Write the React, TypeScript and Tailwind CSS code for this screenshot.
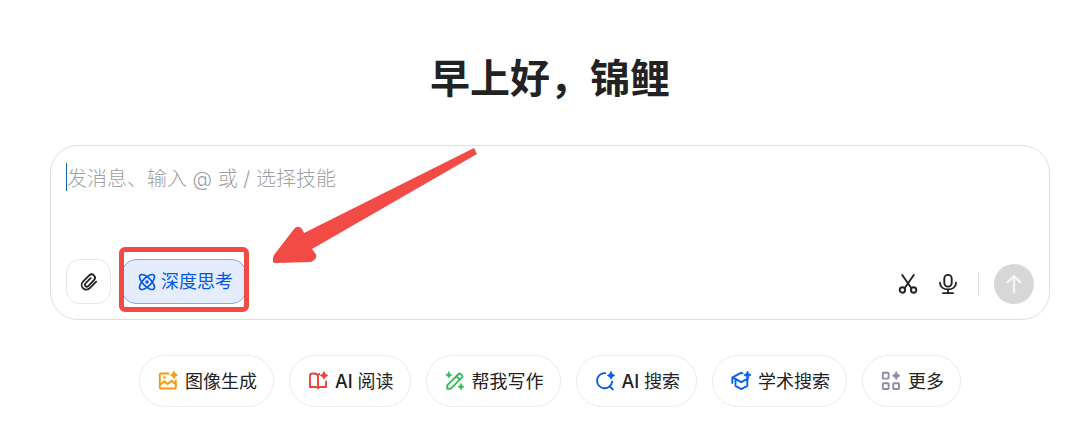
import { ReactNode, useState } from 'react'

interface IconProps {
  children: ReactNode
  className?: string
}

function Icon({ children, className = 'size-5' }: IconProps) {
  return (
    <svg
      viewBox="0 0 20 20"
      fill="none"
      stroke="currentColor"
      strokeWidth="1.9"
      strokeLinecap="round"
      strokeLinejoin="round"
      aria-hidden="true"
      className={`shrink-0 ${className}`}
    >
      {children}
    </svg>
  )
}

function Spark({ x = 16, y = 4, r = 3.6 }) {
  return (
    <path
      transform={`translate(${x} ${y}) scale(${r})`}
      d="M0-1Q.2-.2 1 0Q.2.2 0 1Q-.2.2-1 0Q-.2-.2 0-1Z"
      fill="currentColor"
      strokeWidth=".25"
    />
  )
}

const skills = [
  {
    prefix: '',
    label: '图像生成',
    color: 'text-[#f59a0b]',
    icon: (
      <>
        <path d="M10.5 2.5H2.8a1 1 0 0 0-1 1v13a1 1 0 0 0 1 1h14a1 1 0 0 0 1-1V9.5" />
        <path d="m2 14 4.2-3.7 3.3 2.8 4.3-3.3 4 3.4" />
        <circle cx="6.6" cy="6.5" r="1.3" fill="currentColor" stroke="none" />
        <Spark />
      </>
    ),
  },
  {
    prefix: 'AI',
    label: '阅读',
    color: 'text-[#ee4038]',
    icon: (
      <>
        <path d="M10 16V4.5Q8.8 2.5 6.2 2.5H4.5Q2 2.5 2 5v11h5.5q1.5 0 2.5 1.2 1-1.2 2.5-1.2H18v-5.5" />
        <path d="M10 4.5q.4-1 1.4-1.6" />
        <Spark x={16} y={4.5} />
      </>
    ),
  },
  {
    prefix: '',
    label: '帮我写作',
    color: 'text-[#34bd59]',
    icon: (
      <>
        <path d="M2.2 17.8v-3.4L13.6 3a1.5 1.5 0 0 1 2.1 0l1.3 1.3a1.5 1.5 0 0 1 0 2.1L5.6 17.8Z" />
        <path d="m11.5 5.3 3.2 3.2" />
        <Spark x={3.8} y={4} r={3} />
        <Spark x={16} y={15.8} r={3} />
      </>
    ),
  },
  {
    prefix: 'AI',
    label: '搜索',
    color: 'text-[#0b57e6]',
    icon: (
      <>
        <path d="M10.2 2.1A7.6 7.6 0 1 0 17.2 10.7M14.8 15.4l3 2.9" />
        <Spark x={16} y={4.5} />
      </>
    ),
  },
  {
    prefix: '',
    label: '学术搜索',
    color: 'text-[#0b62e9]',
    icon: (
      <>
        <path d="M11.5 2.4 10 1.8 1.5 6.4l8.7 4.8 7-3.9M1.3 6.6V12M4.5 8.6v6.2l5.8 3.3 6-3.3V8.6" />
        <Spark x={16.5} y={4} />
      </>
    ),
  },
  {
    prefix: '',
    label: '更多',
    color: 'text-[#8d8da9]',
    icon: (
      <>
        <rect x="1.8" y="1.8" width="5.8" height="5.8" rx=".8" />
        <rect x="1.8" y="12.2" width="5.8" height="5.8" rx=".8" />
        <rect x="12.2" y="12.2" width="5.8" height="5.8" rx=".8" />
        <Spark x={15.2} y={4.7} r={3.8} />
      </>
    ),
  },
]

function Composer() {
  const [message, setMessage] = useState('')

  return (
    <form
      onSubmit={(event) => event.preventDefault()}
      className="relative mt-10 flex w-full flex-col rounded-[28px] border border-[#dedede] px-[15px] pt-[17px] pb-[15px]"
    >
      <div className="flex items-start">
        <span className="h-7 w-px shrink-0 bg-[#1565a5]" />
        <textarea
          aria-label="发消息"
          rows={3}
          value={message}
          onChange={(event) => setMessage(event.target.value)}
          placeholder="发消息、输入 @ 或 / 选择技能"
          className="block h-24 w-full resize-none bg-transparent text-[20px] leading-8 font-light text-[#222] outline-none placeholder:text-[#a0a0a0]"
        />
      </div>

      <div className="flex items-end justify-between">
        <div className="flex items-center gap-[11px]">
          <button
            type="button"
            aria-label="添加附件"
            className="flex size-[45px] items-center justify-center rounded-[14px] border border-[#e8e8e8] text-[#222]"
          >
            <Icon>
              <path d="m17.2 9.6-6.4 6.6a4.7 4.7 0 0 1-6.8-6.5l6.2-6.4a3.4 3.4 0 0 1 4.9 4.7l-5.9 6.1a1.9 1.9 0 0 1-2.8-2.6l5.2-5.4" strokeWidth="1.8" />
            </Icon>
          </button>

          <div className="relative">
            <button
              type="button"
              className="flex h-[45px] items-center gap-[5px] rounded-[14px] border border-[#83a8ee] bg-[#e5edfd] pr-3 pl-[15px] text-[18px] text-[#0757e5]"
            >
              <Icon className="size-[18px]">
                <ellipse cx="10" cy="10" rx="4.6" ry="10.8" transform="rotate(45 10 10)" />
                <ellipse cx="10" cy="10" rx="4.6" ry="10.8" transform="rotate(-45 10 10)" />
                <circle cx="10" cy="10" r="1.9" fill="currentColor" stroke="none" />
              </Icon>
              深度思考
            </button>
            <span className="pointer-events-none absolute -inset-x-[3px] -top-3 -bottom-2 rounded-md border-5 border-[#f24b46]" />
          </div>
        </div>

        <div className="flex items-center text-[#222]">
          <button type="button" aria-label="截图" className="p-2.5">
            <Icon>
              <path d="M4.2 1 13.3 14M15.8 1 6.7 14" />
              <circle cx="4.4" cy="16" r="2.7" />
              <circle cx="15.6" cy="16" r="2.7" />
            </Icon>
          </button>
          <button type="button" aria-label="语音输入" className="p-2.5">
            <Icon>
              <rect x="6.3" y=".9" width="7.4" height="11.7" rx="3.7" />
              <path d="M2 8.7c0 4.2 3.4 6.7 8 6.7s8-2.5 8-6.7M10 15.4v3.7M5 19.1h10" />
            </Icon>
          </button>
          <span className="mx-2.5 h-6 w-px bg-[#e2e2e2]" />
          <button
            type="submit"
            aria-label="发送"
            className="ml-[5px] flex size-10 items-center justify-center rounded-full bg-[#d7d7d7] text-[#f5f5f5]"
          >
            <Icon>
              <path d="M10 18V2M3.8 8.2 10 2l6.2 6.2" strokeWidth="2.4" />
            </Icon>
          </button>
        </div>
      </div>

      <svg
        viewBox="0 0 206 118"
        aria-hidden="true"
        className="pointer-events-none absolute top-0 left-[222px] h-[118px] w-[206px] fill-[#f24b46]"
      >
        <path d="M201 2 31 87Q27 77 21 83L1 109Q-3 118 4 117L38 116Q46 112 42 107L39 103 204 8Z" />
      </svg>
    </form>
  )
}

export default function App() {
  return (
    <main className="flex flex-col items-center bg-white pt-[52px] pr-[29px] pb-9 pl-[50px] font-[Inter,'Noto_Sans_CJK_SC',sans-serif] text-[#222]">
      <h1 className="text-[40px] leading-[53px] font-bold">早上好，锦鲤</h1>

      <Composer />

      <div className="mt-[35px] flex flex-wrap justify-center gap-[15px]">
        {skills.map((skill) => (
          <button
            key={skill.label}
            type="button"
            className="flex h-[52px] items-center gap-[7px] rounded-full border border-[#ebebeb] pr-4 pl-[18px] text-[18px]"
          >
            <Icon className={`size-5 ${skill.color}`}>{skill.icon}</Icon>
            <span>
              {skill.prefix && (
                <span className="font-medium">{skill.prefix} </span>
              )}
              {skill.label}
            </span>
          </button>
        ))}
      </div>
    </main>
  )
}
